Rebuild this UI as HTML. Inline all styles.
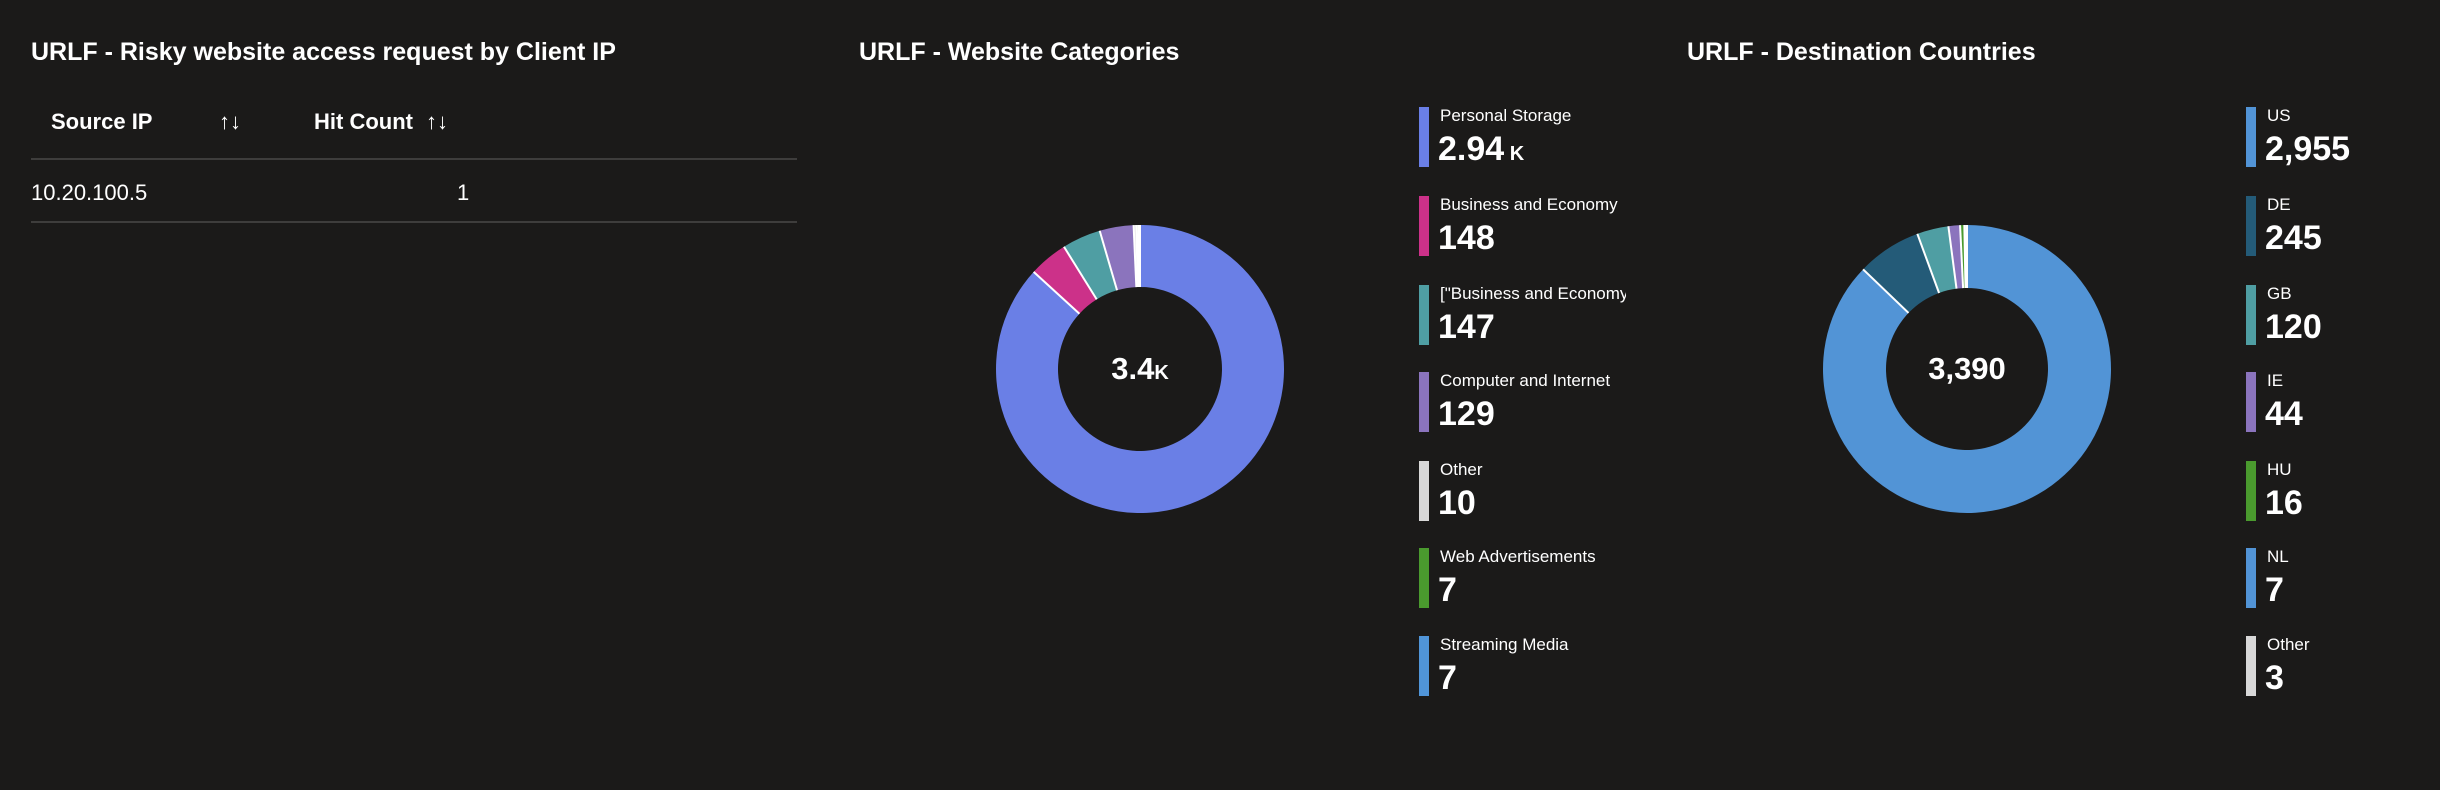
<!DOCTYPE html>
<html><head><meta charset="utf-8"><style>
body{margin:0;width:2440px;height:790px;background:#1b1a19;color:#fff;font-family:"Liberation Sans",sans-serif;position:relative;overflow:hidden}
.a{position:absolute;white-space:nowrap}
.t{font-size:25px;font-weight:bold;top:38px}
.h{font-size:22px;top:109px;font-weight:bold}
.r{font-size:22px;top:180px}
.ln{position:absolute;left:31px;width:766px;height:2px;background:#3e3d3c}
.bar{position:absolute;width:10px;height:60px}
.lab{position:absolute;font-size:17px;overflow:hidden;white-space:nowrap}
.val{position:absolute;font-size:34px;font-weight:bold}
.val small{font-size:20px}
.ctr{position:absolute;font-size:31px;font-weight:bold;transform:translate(-50%,-50%)}
</style></head><body>
<div class="a t" style="left:31px">URLF - Risky website access request by Client IP</div>
<div class="a t" style="left:859px">URLF - Website Categories</div>
<div class="a t" style="left:1687px">URLF - Destination Countries</div>
<div class="a h" style="left:51px">Source IP</div>
<div class="a h" style="left:219px;font-weight:normal">↑↓</div>
<div class="a h" style="left:314px">Hit Count</div>
<div class="a h" style="left:426px;font-weight:normal">↑↓</div>
<div class="ln" style="top:158px"></div>
<div class="a r" style="left:31px">10.20.100.5</div>
<div class="a r" style="left:457px">1</div>
<div class="ln" style="top:221px"></div>
<svg id="s" width="2440" height="790" style="position:absolute;left:0;top:0"></svg>
<div class="ctr" style="left:1140px;top:369px">3.4<small style="font-size:20px">K</small></div>
<div class="ctr" style="left:1967px;top:369px">3,390</div>
<div id="L"></div>
<script>
function donut(cx,cy,R,r,data){var tot=data.reduce((a,b)=>a+b[0],0),a=-Math.PI/2,s='',ln='';
var p=(ang,rad)=>(cx+rad*Math.cos(ang)).toFixed(2)+' '+(cy+rad*Math.sin(ang)).toFixed(2);
data.forEach(d=>{var b=a+d[0]/tot*2*Math.PI,l=(b-a)>Math.PI?1:0;
s+='<path d="M'+p(a,R)+' A'+R+' '+R+' 0 '+l+' 1 '+p(b,R)+' L'+p(b,r)+' A'+r+' '+r+' 0 '+l+' 0 '+p(a,r)+'Z" fill="'+d[1]+'"/>';
ln+='<path d="M'+p(a,R)+' L'+p(a,r)+'" stroke="#fff" stroke-width="2"/>';a=b;});return s+ln;}
var c1=[[2940,'#6a7fe6'],[148,'#cc3189'],[147,'#4f9ea3'],[129,'#8b74bd'],[10,'#d8d8d8'],[7,'#4a9a2e'],[7,'#5095d8']];
var c2=[[2955,'#5294d6'],[245,'#245b78'],[120,'#4f9ea3'],[44,'#8b74bd'],[16,'#4a9a2e'],[7,'#5294d6'],[3,'#d8d8d8']];
document.getElementById('s').innerHTML=donut(1140,369,144,82,c1)+donut(1967,369,144,81,c2);
var tops=[107,196,285,372,461,548,636],h='';
function leg(x,items){items.forEach((it,i)=>{var y=tops[i];
h+='<div class="bar" style="left:'+x+'px;top:'+y+'px;background:'+it[2]+'"></div><div class="lab" style="left:'+(x+21)+'px;top:'+(y-1)+'px;max-width:'+(x<2000?186:150)+'px">'+it[0]+'</div><div class="val" style="left:'+(x+19)+'px;top:'+(y+23)+'px">'+it[1]+'</div>';});}
leg(1419,[['Personal Storage','2.94<small> K</small>','#6a7fe6'],['Business and Economy','148','#cc3189'],['["Business and Economy"]','147','#4f9ea3'],['Computer and Internet','129','#8b74bd'],['Other','10','#d8d8d8'],['Web Advertisements','7','#4a9a2e'],['Streaming Media','7','#5095d8']]);
leg(2246,[['US','2,955','#5294d6'],['DE','245','#245b78'],['GB','120','#4f9ea3'],['IE','44','#8b74bd'],['HU','16','#4a9a2e'],['NL','7','#5294d6'],['Other','3','#d8d8d8']]);
document.getElementById('L').innerHTML=h;
</script>
</body></html>
